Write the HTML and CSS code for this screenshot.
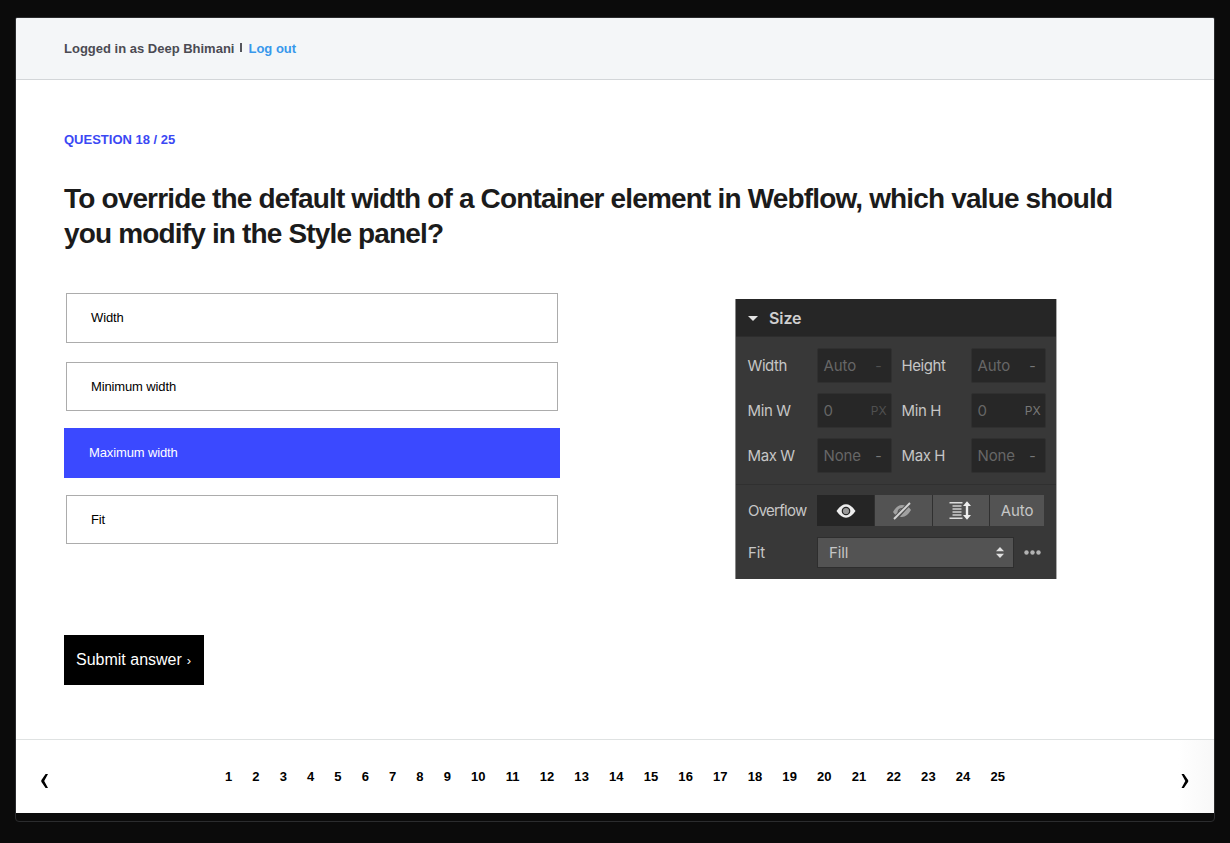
FILE: index.html
```html
<!DOCTYPE html>
<html lang="en">
<head>
<meta charset="utf-8">
<title>Question 18 / 25</title>
<link rel="stylesheet" href="styles.css">
</head>
<body>
<div class="window">
  <header class="topbar"><span class="user">Logged in as Deep Bhimani</span><span class="divider"></span><a class="logout">Log out</a></header>
  <main class="content">
    <div class="counter">QUESTION 18 / 25</div>
    <h1 class="title">To override the default width of a Container element in Webflow, which value should<br>you modify in the Style panel?</h1>
    <div class="columns">
      <div class="answers">
        <div class="answer tall">Width</div>
        <div class="answer">Minimum width</div>
        <div class="answer selected">Maximum width</div>
        <div class="answer">Fit</div>
        <button class="submit"><span>Submit answer</span><span class="submit-arrow">›</span></button>
      </div>
      <section class="panel">
        <div class="panel-head"><svg width="10" height="5" viewBox="0 0 10 5"><path d="M0 0h10L5 5z" fill="#e4e4e4"/></svg><span>Size</span></div>
        <div class="sizes">
          <label>Width</label><div class="field">Auto<i class="dim dash">-</i></div><label>Height</label><div class="field">Auto<i class="dash">-</i></div>
          <label>Min W</label><div class="field">0<i class="dim">PX</i></div><label>Min H</label><div class="field">0<i>PX</i></div>
          <label>Max W</label><div class="field">None<i class="dash">-</i></div><label>Max H</label><div class="field">None<i class="dash">-</i></div>
        </div>
        <div class="options">
          <div class="option-row">
            <label class="overflow-label">Overflow</label>
            <div class="segments">
              <div class="segment active"><svg width="20" height="14" viewBox="0 0 20 14"><path d="M.5 7Q5 .3 10 .3T19.500 7Q15 13.700 10 13.700T.5 7z" fill="#eee"/><circle cx="10" cy="7" r="4.300" fill="#262626"/><circle cx="10" cy="7" r="3.100" fill="#999"/></svg></div>
              <div class="segment"><svg width="20" height="18" viewBox="0 0 20 18"><path d="M1 10Q5 3 10 3q2 0 4 1L5 14Q2.500 12.500 1 10zM19 8Q15 15 10 15q-1.200 0-2-.3L16.500 5Q18 6.300 19 8z" fill="#a0a0a0"/><path d="M7 12q-1.500-2 0-4t4-1" fill="none" stroke="#555" stroke-width="1.300"/><path d="M2 17L18 1" stroke="#555" stroke-width="4"/><path d="M2 17L18 1" stroke="#d4d4d4" stroke-width="1.900"/></svg></div>
              <div class="segment"><svg width="22" height="19" viewBox="0 0 22 19"><path d="M.5 1.700h13M.5 17.300h13" stroke="#ddd" stroke-width="1.400"/><path d="M3.500 5h9M3.500 8h9M3.500 11h9M3.500 14h9" stroke="#b0b0b0" stroke-width="2"/><path d="M18 3v13" stroke="#eee" stroke-width="2.400"/><path d="M18 .3L22 5h-8zM18 18.700L22 14h-8z" fill="#eee"/></svg></div>
              <div class="segment">Auto</div>
            </div>
          </div>
          <div class="option-row fit-row">
            <label class="overflow-label">Fit</label>
            <div class="select"><span>Fill</span><svg width="8" height="11" viewBox="0 0 8 11"><path d="M0 4.300L4 0l4 4.300zM0 6.700L4 11l4-4.300z" fill="#e0e0e0"/></svg></div>
            <svg class="more" width="17" height="5" viewBox="0 0 17 5"><g fill="#b2b2b2"><circle cx="2.500" cy="2.500" r="2.200"/><circle cx="8.500" cy="2.500" r="2.200"/><circle cx="14.500" cy="2.500" r="2.200"/></g></svg>
          </div>
        </div>
      </section>
    </div>
  </main>
  <nav class="pager">
    <svg class="chevron" width="9" height="14" viewBox="0 0 9 14"><path d="M5.600 0H8L4.200 7l3.800 7H5.600L1.300 7.700V6.300z" fill="#000"/></svg>
    <div class="pages"><a>1</a><a>2</a><a>3</a><a>4</a><a>5</a><a>6</a><a>7</a><a>8</a><a>9</a><a>10</a><a>11</a><a>12</a><a>13</a><a>14</a><a>15</a><a>16</a><a>17</a><a>18</a><a>19</a><a>20</a><a>21</a><a>22</a><a>23</a><a>24</a><a>25</a></div>
    <svg class="chevron" width="9" height="14" viewBox="0 0 9 14"><path d="M2.900 0H.5L4.300 7 .5 14h2.400L7.200 7.700V6.300z" fill="#000"/></svg>
  </nav>
</div>
</body>
</html>
```
FILE: styles.css
```css
* { box-sizing: border-box; }
body {
  margin: 0;
  height: 843px;
  padding: 17px 15px 21px;
  background: #0b0b0b;
  font-family: "Liberation Sans", Arial, sans-serif;
  overflow: hidden;
}
.window {
  width: 1200px;
  height: 805px;
  border: 1px solid #2b2c2e;
  border-radius: 2px 2px 4px 4px;
  overflow: hidden;
}
.topbar {
  height: 62px;
  display: flex;
  align-items: center;
  padding: 0 48px;
  background: #f4f6f8;
  border-bottom: 1px solid #d3d6d9;
  font-size: 13px;
  font-weight: bold;
  color: #4b4b53;
}
.divider { width: 2px; height: 9px; margin: -3px 6px 0 6px; background: #55555c; }
.logout { color: #3898ec; }
.content { height: 659px; padding: 52px 48px 0; background: #fff; }
.counter { font-size: 13px; line-height: 16px; font-weight: bold; color: #3b48f4; }
.title { margin: 33px 0 0; font-size: 28px; line-height: 35px; color: #1b1b1b; white-space: nowrap; letter-spacing: -.84px; }
.columns { display: flex; padding-top: 42px; }
.answers { width: 672px; }
.answer {
  width: 492px;
  height: 49px;
  margin: 0 2px 18px;
  padding-left: 24px;
  border: 1px solid #acacac;
  display: flex;
  align-items: center;
  font-size: 13px;
  letter-spacing: -.13px;
  color: #000;
}
.answer.tall { height: 50px; margin-bottom: 19px; padding-bottom: 2px; }
.answer.selected { width: 496px; height: 50px; margin: -1px 0 17px; padding: 0 0 2px 25px; border: 0; background: #3b49ff; color: #fff; }
.submit {
  display: flex;
  align-items: center;
  width: 140px;
  height: 50px;
  margin-top: 91px;
  padding: 0 12px;
  border: 0;
  background: #000;
  color: #fff;
  font: 16px "Liberation Sans", Arial, sans-serif;
}
.submit-arrow { margin-left: 5px; font-size: 13px; }
.panel {
  width: 320px;
  height: 280px;
  margin-top: 6px;
  background: #383838;
  color: #c6c6c6;
  font: 15px Inter, sans-serif;
  letter-spacing: -.1px;
  box-shadow: -1px 0 #888, 1px 0 #aaa;
}
.panel-head {
  height: 38px;
  padding-left: 12px;
  display: flex;
  align-items: center;
  gap: 11px;
  background: #262626;
  border-bottom: 1px solid #2d2d2d;
  font-weight: 600;
  font-size: 16px;
  color: #d0d0d0;
}
.panel-head svg { margin-top: 2px; }
.sizes {
  display: grid;
  grid-template-columns: 69px 85px 69px 75px;
  grid-auto-rows: 35px;
  row-gap: 10px;
  align-items: center;
  height: 148px;
  padding: 11px 0 0 11.500px;
  border-bottom: 1px solid #303030;
}
.sizes label { letter-spacing: -.4px; }
.field {
  width: 75px;
  height: 35px;
  padding: 0 9px 0 6px;
  display: flex;
  align-items: center;
  justify-content: space-between;
  background: #272727;
  border: 1px solid #303030;
  border-radius: 2px;
  color: #666;
}
.field i { font-style: normal; font-size: 12px; color: #777; margin-right: -5px; }
.field .dim { color: #505050; }
.field .dash { margin-right: 0; font-size: 14px; }
.options { padding: 9px 11px 0 12px; }
.option-row { display: flex; align-items: center; height: 33px; }
.overflow-label { width: 69px; letter-spacing: -.75px; }
.fit-row .overflow-label { letter-spacing: -.1px; }
.segments { display: grid; grid-template-columns: 57px 57px 56px 54px; gap: 1px; height: 31px; background: #303030; }
.segment { display: flex; align-items: center; justify-content: center; background: #535353; }
.segment.active { background: #252525; }
.segment:nth-child(2) svg { margin-right: 3px; }
.segment:nth-child(3) svg { margin-right: 2px; }
.fit-row { margin-top: 9px; }
.select { width: 197px; height: 31px; margin-left: 0; padding: 0 9px 0 11px; display: flex; align-items: center; justify-content: space-between; background: #535353; border: 1px solid #2e2e2e; }
.more { margin-left: 10px; }
.pager {
  display: flex;
  align-items: center;
  justify-content: space-between;
  height: 74px;
  padding: 0 24px;
  border-top: 1px solid #dfe2e2;
  background: linear-gradient(90deg, #fff 97%, #f8f8f8);
}
.chevron { margin-top: 9px; }
.pages { display: flex; gap: 20px; font-size: 13px; font-weight: bold; color: #000; letter-spacing: .1px; }
```
